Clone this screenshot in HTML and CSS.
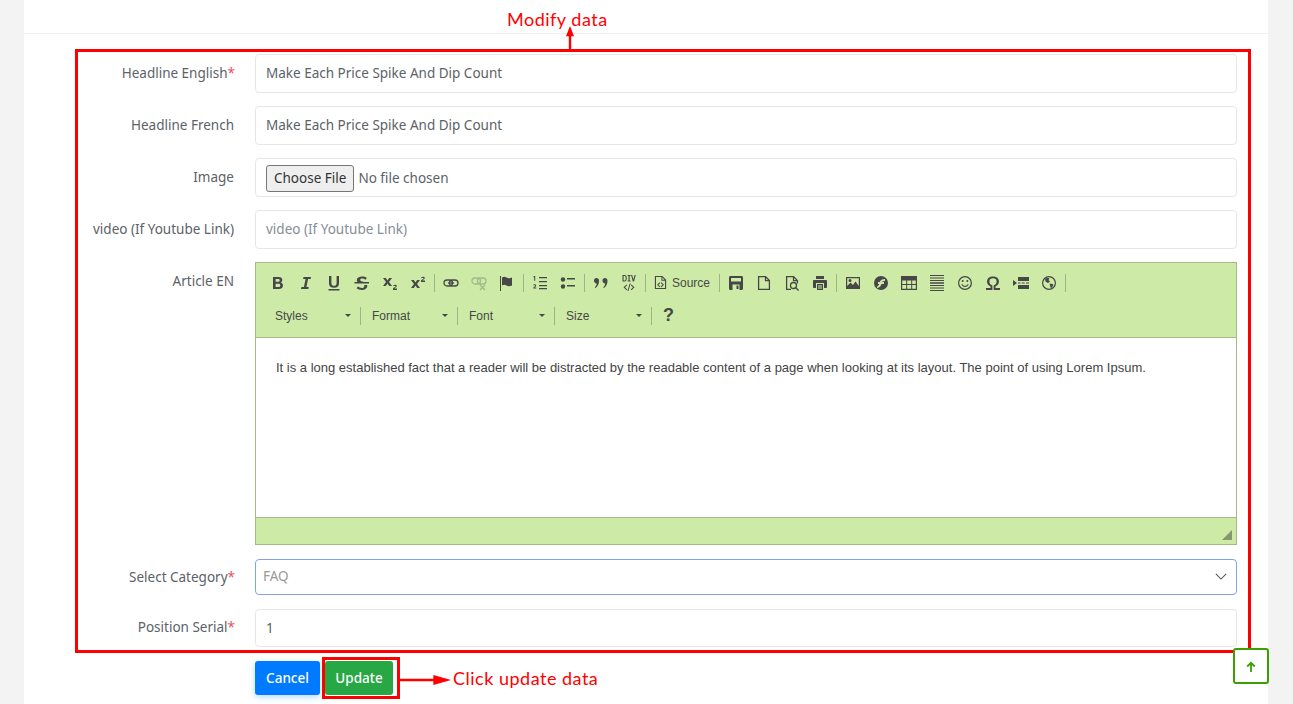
FILE: index.html
```html
<!DOCTYPE html>
<html lang="en">
<head>
    <meta charset="UTF-8">
    <title>Edit article</title>
    <link rel="stylesheet" href="styles.css">
</head>
<body>
    <div class="card">
        <div class="card-head"></div>
        <form class="edit-form">
            <div class="row">
                <label>Headline English<span class="req">*</span></label>
                <input class="field" type="text" value="Make Each Price Spike And Dip Count">
            </div>
            <div class="row">
                <label>Headline French</label>
                <input class="field" type="text" value="Make Each Price Spike And Dip Count">
            </div>
            <div class="row">
                <label>Image</label>
                <div class="field file-field"><span class="file-btn">Choose File</span><span>No file chosen</span></div>
            </div>
            <div class="row">
                <label>video (If Youtube Link)</label>
                <input class="field" type="text" placeholder="video (If Youtube Link)">
            </div>
            <div class="row">
                <label>Article EN</label>
                <div class="editor">
                    <div class="toolbar">
                        <div class="tool-line">
                            <span class="tool"><svg viewBox="0 0 16 16"><path d="M3 2h5.500c2.500 0 3.800 1.100 3.800 3 0 1.200-.6 2.100-1.700 2.600 1.500.4 2.400 1.500 2.400 3 0 2.200-1.500 3.400-4.200 3.400H3zm2.600 2.100v2.700h2.500c1 0 1.600-.5 1.600-1.400s-.6-1.300-1.600-1.300zm0 4.700v3.100h2.800c1.200 0 1.900-.5 1.900-1.500 0-1.100-.7-1.600-1.900-1.600z"/></svg></span>
                            <span class="tool"><svg viewBox="0 0 16 16"><path d="M5.500 2h7.500l-.4 2h-2.500l-1.700 8h2.400l-.4 2H3l.4-2h2.500l1.700-8H5.100z"/></svg></span>
                            <span class="tool"><svg viewBox="0 0 16 16"><path d="M3 1h2.400v7c0 1.900.9 2.800 2.600 2.800s2.600-.9 2.600-2.800V1H13v7.200c0 3-1.800 4.600-5 4.600S3 11.200 3 8.200zM2.500 14h11v1.500h-11z"/></svg></span>
                            <span class="tool"><svg viewBox="0 0 16 16"><path d="M8.300 1.500c1.900 0 3.300.5 4.500 1.400l-1.200 1.800c-1-.7-2.100-1.100-3.300-1.100-1.300 0-2.100.5-2.100 1.300 0 .6.400 1 1.200 1.300l2.500.9h5.100v1.400H.5V7.100h2.900C3 6.500 2.800 5.900 2.800 5.100c0-2.200 2.200-3.600 5.500-3.600zM10.800 10h2.300c.1.300.2.700.2 1.100 0 2.400-2.100 3.900-5.400 3.900-2.100 0-3.900-.6-5.300-1.700l1.300-1.800c1.200.9 2.500 1.400 3.900 1.400 1.500 0 2.500-.6 2.500-1.500 0-.2-.1-.3-.5-.4z"/></svg></span>
                            <span class="tool"><svg viewBox="0 0 16 16"><path d="M1 3h2.800l1.700 2.500L7.200 3H10L7 7l3 4H7.200L5.500 8.500 3.800 11H1l3-4zM11 13.800c0-1.200 2.600-1.700 2.600-2.600 0-.3-.2-.5-.7-.5-.4 0-.9.200-1.400.5l-.4-.8c.6-.4 1.300-.7 2-.7 1 0 1.700.5 1.700 1.400 0 1.200-1.600 1.600-2.200 2.300H15V15h-4z"/></svg></span>
                            <span class="tool"><svg viewBox="0 0 16 16"><path d="M1 5h2.800l1.700 2.500L7.200 5H10L7 9l3 4H7.200l-1.700-2.500L3.800 13H1l3-4zM11 5.800c0-1.200 2.600-1.700 2.600-2.600 0-.3-.2-.5-.7-.5-.4 0-.9.200-1.400.5l-.4-.8c.6-.4 1.300-.7 2-.7 1 0 1.700.5 1.700 1.400 0 1.200-1.600 1.600-2.200 2.300H15V7h-4z"/></svg></span>
                            <span class="tool-sep"></span>
                            <span class="tool"><svg class="outline" viewBox="0 0 16 16"><rect x="1" y="5" width="8.500" height="6" rx="3"/><rect x="6.500" y="5" width="8.500" height="6" rx="3"/><path d="M5 8h6"/></svg></span>
                            <span class="tool tool-off"><svg class="outline" viewBox="0 0 16 16"><rect x="1" y="3" width="8.500" height="6" rx="3"/><rect x="6.500" y="3" width="8.500" height="6" rx="3"/><path d="M9 10l5 5M14 10l-5 5"/></svg></span>
                            <span class="tool"><svg viewBox="0 0 16 16"><path d="M1 1h1v15H1zM3 2.500c1.500-1 3-1 4.500 0s3.500 1 5.500 0v8c-2 1-4 1-5.500 0s-3-1-4.500 0z"/></svg></span>
                            <span class="tool-sep"></span>
                            <span class="tool"><svg viewBox="0 0 16 16"><path d="M7 2h8v1.300H7zM7 6h8v1.300H7zM7 10h8v1.300H7zM7 13h8v1.300H7z"/><path d="M2.200 1h1v4.800h-1V2.200H1.400V1.600zM1.400 9.500c.3-.5 2.800-.5 2.800.9 0 1-1.200 1.400-1.700 2.100h1.800v1H1.300v-.8c.6-1 1.900-1.500 1.900-2.200 0-.5-1-.5-1.500 0z"/></svg></span>
                            <span class="tool"><svg viewBox="0 0 16 16"><circle cx="3" cy="4.500" r="2.200"/><circle cx="3" cy="11.500" r="2.200"/><path d="M7 3h8v1.500H7zM7 10h8v1.500H7z"/></svg></span>
                            <span class="tool-sep"></span>
                            <span class="tool"><svg viewBox="0 0 16 16"><path d="M1 5.500C1 4 2.100 3 3.500 3S6 4 6 5.500C6 8.500 5 11 2.500 13l-.8-.7C3 11 3.600 9.900 3.700 8.400 2 8.300 1 7.200 1 5.500zM9.500 5.500C9.500 4 10.600 3 12 3s2.500 1 2.500 2.500c0 3-1 5.500-3.500 7.500l-.8-.7c1.300-1.300 1.900-2.400 2-3.900-1.700-.1-2.700-1.200-2.700-2.900z"/></svg></span>
                            <span class="tool"><svg viewBox="0 0 16 16"><path d="M1.500 0H3.500C5 0 5.800 1 5.800 3.200S5 6.500 3.500 6.500h-2zM2.600 1v4.500h.8c.9 0 1.300-.7 1.300-2.300S4.300 1 3.400 1zM6.600 0h3v1H8.700v4.500h.9v1h-3v-1h.9V1h-.9zM10 0h1.200l1.200 4.600L13.600 0h1.200l-1.800 6.500h-1.200zM5.500 9.500l.7.700L4 12.300l2.200 2.100-.7.800L2.500 12.300zM10.500 9.500l3 2.800-3 2.900-.7-.8 2.200-2.100-2.200-2.100zM8.700 8.500h1l-2.400 8h-1z"/></svg></span>
                            <span class="tool-sep"></span>
                            <span class="tool tool-wide"><svg viewBox="0 0 16 16"><path d="M2 1h8l4 4v10H2zm1.200 1.200v11.600h9.600V6H9V2.200zM10 2.700V5h2.300zM7 7.800l.8.700-2 1.900 2 1.900-.8.700-2.700-2.600zM9 7.800l2.700 2.600L9 13l-.8-.7 2-1.900-2-1.900z" fill-rule="evenodd"/></svg><span class="tool-text">Source</span></span>
                            <span class="tool-sep"></span>
                            <span class="tool"><svg viewBox="0 0 16 16"><path d="M2.500 1h11C14.400 1 15 1.600 15 2.500v11c0 .9-.6 1.500-1.500 1.500h-11C1.600 15 1 14.400 1 13.500v-11C1 1.600 1.600 1 2.500 1zM3 3v3.500h10V3zM4.500 9.500V15h7V9.500zM8.500 10.500h2v3.500h-2z" fill-rule="evenodd"/></svg></span>
                            <span class="tool"><svg class="outline" viewBox="0 0 16 16"><path d="M2.600 1.600h7l3.800 4v8.800H2.600zM9.500 1.600v4h3.900"/></svg></span>
                            <span class="tool"><svg class="outline" viewBox="0 0 16 16"><path d="M7 14.400H2.600V1.600h7l3.800 4v3M9.500 1.600v4h3.900"/><circle cx="9.500" cy="10.500" r="3"/><path d="M11.600 12.600l3 2.800"/></svg></span>
                            <span class="tool"><svg viewBox="0 0 16 16"><path d="M4 1h8v3H4zM2 5h12c.6 0 1 .4 1 1v6c0 .6-.4 1-1 1h-2V8H4v5H2c-.6 0-1-.4-1-1V6c0-.6.4-1 1-1zM5 9h6v6H5zm1 1.500v1h4v-1zm0 2v1h4v-1z" fill-rule="evenodd"/></svg></span>
                            <span class="tool-sep"></span>
                            <span class="tool"><svg viewBox="0 0 16 16"><path d="M1 2h14v12H1zm1.200 1.200V11l3.300-3.500 2.500 2.600 2.500-3.600 3.300 4.500V3.200zM5 4a1.500 1.500 0 1 1 0 3 1.500 1.500 0 0 1 0-3z" fill-rule="evenodd"/></svg></span>
                            <span class="tool"><svg viewBox="0 0 16 16"><path d="M8 1a7 7 0 1 1 0 14A7 7 0 0 1 8 1zm4 3c-3 0-4.500 1-5.300 3H5v2h1.200C5.800 10.300 5 11.200 4 11.500V13c2.500-.2 3.800-1.700 4.500-4H11V7H9.100c.4-.8 1.300-1.100 2.900-1.100z" fill-rule="evenodd"/></svg></span>
                            <span class="tool"><svg viewBox="0 0 16 16"><path d="M0 1h16v14H0zm1.200 4.500V9h4V5.500zm5 0V9h4V5.500zm5 0V9h3.600V5.500zm-10 4.500v3.800h4V10zm5 0v3.800h4V10zm5 0v3.800h3.600V10z" fill-rule="evenodd"/></svg></span>
                            <span class="tool"><svg viewBox="0 0 16 16"><path d="M1 0h14v1H1zM1 2.500h14v1H1zM1 5h14v1H1zM1 7.200h14v1.600H1zM1 10h14v1H1zM1 12.500h14v1H1zM1 15h14v1H1z"/></svg></span>
                            <span class="tool"><svg viewBox="0 0 16 16"><path d="M8 1a7 7 0 1 1 0 14A7 7 0 0 1 8 1zm0 1.200a5.800 5.800 0 1 0 0 11.600A5.800 5.800 0 0 0 8 2.200z" fill-rule="evenodd"/><circle cx="5.700" cy="6" r="1"/><circle cx="10.300" cy="6" r="1"/><path d="M4.300 9.300h1.200c.5 1 1.400 1.500 2.500 1.500s2-.5 2.500-1.500h1.200C11 11 9.700 12 8 12s-3-1-3.700-2.700z"/></svg></span>
                            <span class="tool"><svg viewBox="0 0 16 16"><path d="M1 13h4.500v-1.500C3.300 10.500 2 8.600 2 6.500 2 3.400 4.500 1.500 8 1.500s6 1.900 6 5c0 2.100-1.300 4-3.500 5V13H15v2H8.600v-4.600c1.900-.7 3-2 3-3.900 0-2-1.400-3.200-3.600-3.200S4.400 4.500 4.400 6.500c0 1.900 1.100 3.200 3 3.900V15H1z"/></svg></span>
                            <span class="tool"><svg viewBox="0 0 16 16"><path d="M0 5l4 3-4 3zM5 2h11v4H5zM5 10h11v4H5zM5 7.500h2.500v1H5zM8.700 7.500h3v1h-3zM13 7.500h3v1h-3z"/></svg></span>
                            <span class="tool"><svg viewBox="0 0 16 16"><path d="M8 1a7 7 0 1 1 0 14A7 7 0 0 1 8 1zm0 1.200a5.800 5.800 0 1 0 0 11.600A5.800 5.800 0 0 0 8 2.200z" fill-rule="evenodd"/><path d="M4 3.500l3-.8 1.500 1-1 1.300 1.500 1.500L7 8 4.500 6.500zM8.500 8.500l3 .5 1 1-2 3-1-.5z"/></svg></span>
                            <span class="tool-sep"></span>
                        </div>
                        <div class="tool-line">
                            <span class="combo">Styles<i class="caret"></i></span>
                            <span class="combo">Format<i class="caret"></i></span>
                            <span class="combo">Font<i class="caret"></i></span>
                            <span class="combo">Size<i class="caret"></i></span>
                            <span class="help-mark">?</span>
                        </div>
                    </div>
                    <div class="editor-body">It is a long established fact that a reader will be distracted by the readable content of a page when looking at its layout. The point of using Lorem Ipsum.</div>
                    <div class="editor-foot"><i class="resizer"></i></div>
                </div>
            </div>
            <div class="row">
                <label>Select Category<span class="req">*</span></label>
                <div class="field select-field">
                    <span class="select-value">FAQ</span>
                    <svg viewBox="0 0 14 8" width="12" height="7" fill="none" stroke="#555" stroke-width="1.200"><path d="M1 1l6 6 6-6"/></svg>
                </div>
            </div>
            <div class="row">
                <label>Position Serial<span class="req">*</span></label>
                <input class="field" type="text" value="1">
            </div>
            <div class="row">
                <span></span>
                <div class="actions">
                    <button class="btn btn-cancel" type="button">Cancel</button>
                    <button class="btn btn-update" type="button">Update</button>
                </div>
            </div>
        </form>
    </div>

    <!-- annotations drawn over the screenshot -->
    <div class="mark mark-form"></div>
    <div class="mark mark-update"></div>
    <span class="note note-modify">Modify data</span>
    <span class="note note-click">Click update data</span>
    <svg class="arrow arrow-up" viewBox="0 0 10 20" preserveAspectRatio="none"><path d="M3.800 20V9H1L5 0l4 9H6.200v11z" fill="#f00"/></svg>
    <svg class="arrow arrow-right" viewBox="0 0 52 10"><path d="M0 3.800h34V0l18 5-18 5V6.200H0z" fill="#f00"/></svg>

    <a class="to-top" href="#"><svg viewBox="0 0 12 12" width="12" height="12" fill="none" stroke="#3aa000" stroke-width="1.800"><path d="M6 11V2M2.200 5.500L6 1.800l3.800 3.700"/></svg></a>
</body>
</html>
```

FILE: styles.css
```css
:root {
    --border-color: #e3e6ea;
    --text-color: #5c6268;
    --editor-green: #cdeba7;
    --editor-line: #a3bc85;
    --mark-red: #ff0000;
}

* {
    box-sizing: border-box;
}

html, body {
    height: 704px;
    overflow: hidden;
}

body {
    margin: 0;
    padding: 0 25px 0 24px;
    background-color: #f3f3f4;
    color: var(--text-color);
    font-family: "Noto Sans", sans-serif;
    font-size: 13.5px;
}

.card {
    background-color: #ffffff;
    height: 704px;
}

.card-head {
    height: 34px;
    border-bottom: 1px solid #eeeeee;
}

.edit-form {
    display: flex;
    flex-direction: column;
    gap: 13.5px;
    padding: 20px 31px 0 0;
}

.row {
    display: grid;
    grid-template-columns: 211px 1fr;
    column-gap: 20px;
}

.row label {
    text-align: right;
    padding-top: 9.5px;
    padding-right: 1px;
    line-height: 18px;
}

.req {
    color: #e8505b;
    margin-right: -1px;
}

.field {
    display: block;
    width: 100%;
    height: 38.5px;
    padding: 0 10px;
    border: 1px solid var(--border-color);
    border-radius: 4px;
    background-color: #ffffff;
    color: var(--text-color);
    font-family: inherit;
    font-size: 13.5px;
}

.field::placeholder {
    color: #868e96;
}

.file-field {
    display: flex;
    align-items: center;
    gap: 4px;
    padding-top: 2px;
}

.file-btn {
    display: inline-block;
    padding: 4px 7px;
    line-height: 17px;
    border: 1px solid #767676;
    border-radius: 3px;
    background-color: #efefef;
    color: #333333;
}

.editor {
    height: 283px;
    border: 1px solid var(--editor-line);
    display: flex;
    flex-direction: column;
}

.toolbar {
    height: 75px;
    background-color: var(--editor-green);
    border-bottom: 1px solid var(--editor-line);
    padding: 7px 0 0 8px;
    font-family: "Liberation Sans", Arial, sans-serif;
    font-size: 12px;
    color: #474747;
}

.tool-line {
    display: flex;
    align-items: center;
    height: 25px;
    margin-bottom: 8px;
}

.tool {
    width: 28px;
    height: 25px;
    flex: none;
    display: flex;
    align-items: center;
    justify-content: center;
}

.tool svg {
    width: 16px;
    height: 16px;
    fill: #474747;
}

.tool svg.outline {
    fill: none;
    stroke: #474747;
    stroke-width: 1.3;
}

.tool-off {
    opacity: 0.3;
}

.tool-wide {
    width: 69px;
    justify-content: flex-start;
    padding-left: 5px;
    gap: 4px;
}

.tool-wide svg {
    width: 15px;
    height: 15px;
}

.tool-text {
    color: #484848;
}

.tool-sep {
    flex: none;
    width: 1px;
    height: 18px;
    margin: 0 2px;
    background-color: #9fb585;
}

.combo {
    flex: none;
    width: 97px;
    height: 18px;
    line-height: 18px;
    padding-left: 11px;
    padding-right: 5px;
    border-right: 1px solid #9fb585;
    display: flex;
    justify-content: space-between;
    align-items: center;
}

.caret {
    border-top: 3px solid #474747;
    border-left: 3px solid transparent;
    border-right: 3px solid transparent;
    margin-right: 4px;
}

.help-mark {
    margin-left: 11px;
    font-size: 18px;
    font-weight: bold;
    color: #474747;
}

.editor-body {
    flex: 1;
    padding: 21px 20px;
    background-color: #ffffff;
    font-family: "Liberation Sans", Arial, sans-serif;
    font-size: 13px;
    line-height: 17px;
    color: #444444;
}

.editor-foot {
    position: relative;
    height: 27px;
    background-color: var(--editor-green);
    border-top: 1px solid var(--editor-line);
}

.resizer {
    position: absolute;
    right: 4px;
    bottom: 4px;
    border-bottom: 10px solid #84976e;
    border-left: 10px solid transparent;
}

.select-field {
    height: 36.5px;
    display: flex;
    align-items: center;
    justify-content: space-between;
    padding: 0 9px 0 7px;
    border-color: #81a5df;
    color: #999999;
}

.select-value {
    padding-bottom: 2px;
}

.actions {
    display: flex;
    gap: 5px;
}

.btn {
    height: 34px;
    border: none;
    border-radius: 3px;
    color: #ffffff;
    font-family: inherit;
    font-size: 13.5px;
    font-weight: 500;
}

.btn-cancel {
    width: 65px;
    background-color: #007bff;
    box-shadow: 0 2px 6px rgba(0, 123, 255, 0.3);
}

.btn-update {
    width: 68px;
    background-color: #28a745;
}

.mark {
    position: absolute;
    border: 3px solid var(--mark-red);
}

.mark-form {
    left: 75px;
    top: 49px;
    width: 1176px;
    height: 604px;
}

.mark-update {
    left: 322px;
    top: 657px;
    width: 78px;
    height: 42px;
}

.note {
    position: absolute;
    color: var(--mark-red);
    font-family: Lato, sans-serif;
    font-size: 18px;
    letter-spacing: 0.5px;
    line-height: 20px;
}

.note-modify {
    left: 507px;
    top: 9px;
}

.note-click {
    left: 453px;
    top: 668px;
}

.arrow {
    position: absolute;
}

.arrow-up {
    left: 565px;
    top: 26px;
    width: 10px;
    height: 23px;
}

.arrow-right {
    left: 400px;
    top: 675px;
    width: 51px;
    height: 10px;
}

.to-top {
    position: absolute;
    left: 1233px;
    top: 648px;
    width: 36px;
    height: 36px;
    border: 2px solid #3aa000;
    border-radius: 3px;
    background-color: #ffffff;
    display: flex;
    align-items: center;
    justify-content: center;
    padding-top: 2px;
}
```
